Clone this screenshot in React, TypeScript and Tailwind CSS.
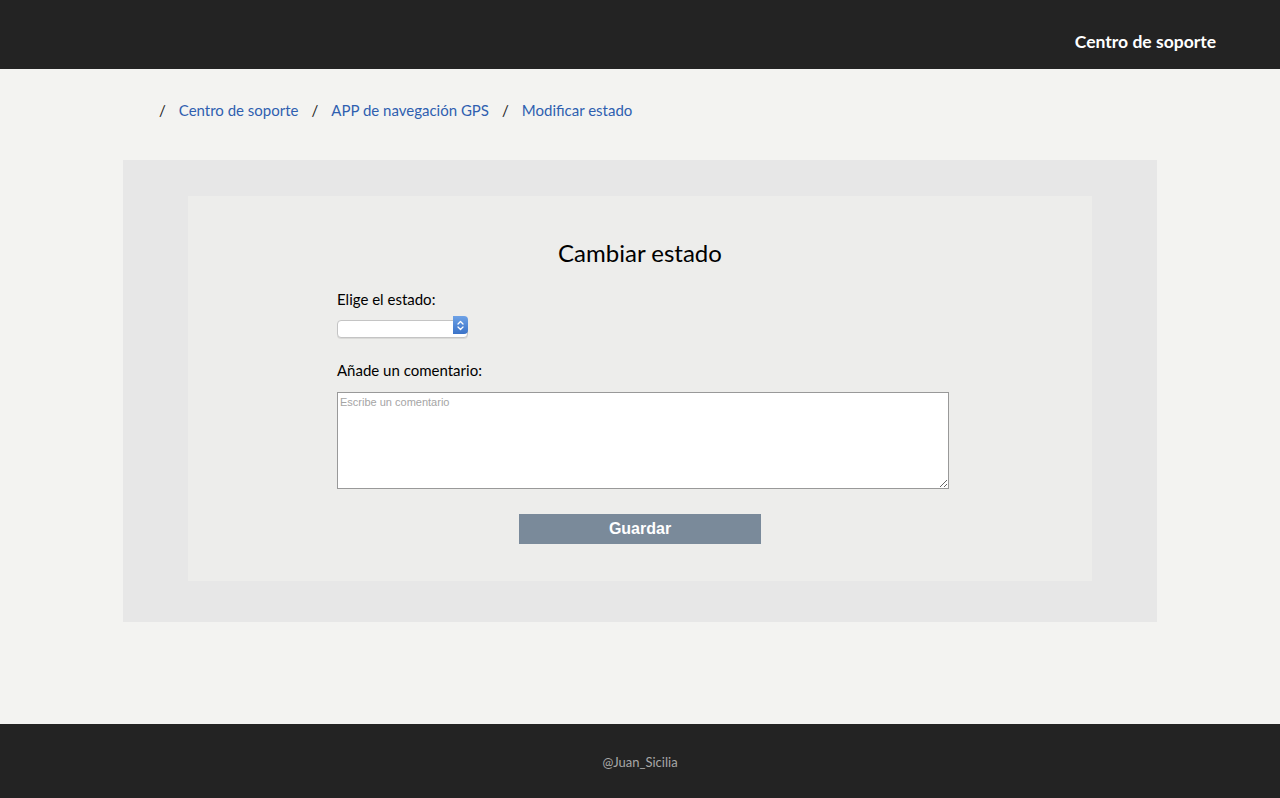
import { useState } from 'react';

const crumbs = ['Centro de soporte', 'APP de navegación GPS', 'Modificar estado'];

function StatusSelect() {
  const [value, setValue] = useState('');
  return (
    <div className="relative w-[131px] h-[18px]">
      <select
        value={value}
        onChange={(e) => setValue(e.target.value)}
        className="appearance-none w-full h-full rounded-[4px] border border-[#c4c4c4] bg-white text-[12px] pl-1 pr-5 outline-none shadow-[0_1px_0_rgba(0,0,0,0.08)]"
      >
        <option value=""></option>
        <option value="abierto">Abierto</option>
        <option value="en-curso">En curso</option>
        <option value="cerrado">Cerrado</option>
      </select>
      <span className="pointer-events-none absolute right-0 top-0 h-[18px] w-[15px] rounded-r-[4px] bg-gradient-to-b from-[#6ea2e6] to-[#3b73c8] flex items-center justify-center">
        <svg width="7" height="11" viewBox="0 0 7 11" fill="none" stroke="white" strokeWidth="1.3" strokeLinecap="round" strokeLinejoin="round">
          <path d="M1 4 L3.5 1.5 L6 4" />
          <path d="M1 7 L3.5 9.5 L6 7" />
        </svg>
      </span>
    </div>
  );
}

export default function App() {
  const [comment, setComment] = useState('');

  return (
    <div className="h-screen flex flex-col bg-[#f3f3f1] font-['Lato','Noto_Sans',sans-serif] text-black">
      {/* Header */}
      <header className="h-[69px] shrink-0 bg-[#232323] flex items-center justify-end pr-[64px] pt-[15px]">
        <a href="#" className="text-white text-[17.5px] font-bold">Centro de soporte</a>
      </header>

      <main className="flex-1">
        {/* Breadcrumb */}
        <nav className="pl-[159px] pt-[31px] h-[91px] box-border">
          <ol className="flex items-center text-[15px] leading-[20px]">
            {crumbs.map((c) => (
              <li key={c} className="flex items-center">
                <span className="text-[#222] mr-[13px]">/</span>
                <a href="#" className="text-[#2f5fb0] mr-[13px]">{c}</a>
              </li>
            ))}
          </ol>
        </nav>

        {/* Card */}
        <section className="mx-[123px] bg-[#e7e7e7] pt-[36px] pb-[41px] px-[65px]">
          <div className="bg-[#ededeb] pt-[43px] pb-[37px]">
            <h1 className="text-center text-[24px] leading-[28px] text-black">Cambiar estado</h1>

            <form className="w-[612px] ml-[149px] mt-[22px]" onSubmit={(e) => e.preventDefault()}>
              <label className="block text-[15px] leading-[20px] mb-[7px]">Elige el estado:</label>
              <StatusSelect />

              <label className="block text-[15px] leading-[20px] mt-[26px] mb-[12px]">Añade un comentario:</label>
              <textarea
                value={comment}
                onChange={(e) => setComment(e.target.value)}
                placeholder="Escribe un comentario"
                className="block w-[612px] h-[97px] bg-white border border-[#999] px-[2px] py-[1px] text-[11px] font-['Liberation_Sans',Arial,sans-serif] placeholder:text-[#a5a5a5] outline-none"
              />

              <div className="flex justify-center mt-[25px]">
                <button
                  type="submit"
                  className="w-[242px] h-[30px] bg-[#7a8a9a] text-white text-[16px] font-bold font-['Liberation_Sans',Arial,sans-serif] -ml-[6px]"
                >
                  Guardar
                </button>
              </div>
            </form>
          </div>
        </section>
      </main>

      {/* Footer */}
      <footer className="h-[74px] shrink-0 bg-[#232323] flex items-center justify-center pt-[4px]">
        <span className="text-[#a8a8a8] text-[13px]">@Juan_Sicilia</span>
      </footer>
    </div>
  );
}
